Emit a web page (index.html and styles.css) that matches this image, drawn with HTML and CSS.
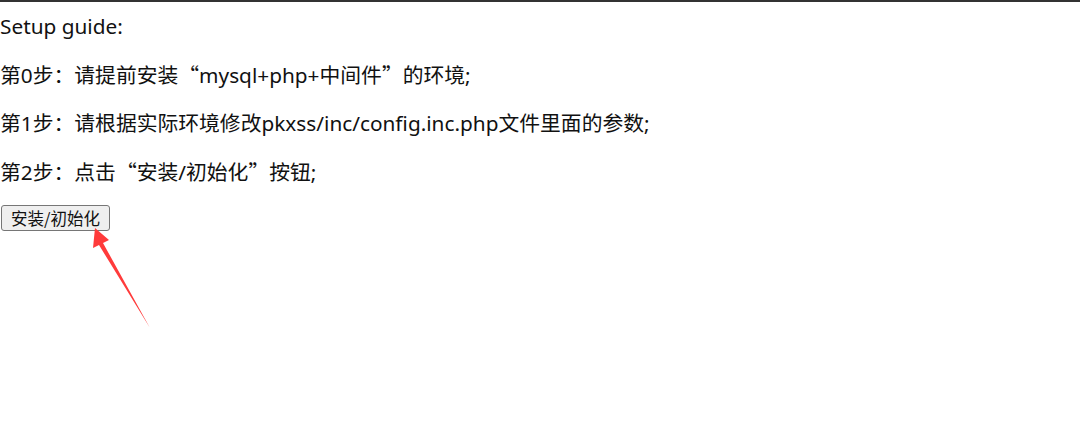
FILE: index.html
```html
<!DOCTYPE html>
<html>
<head>
<meta charset="utf-8">
<link rel="stylesheet" href="styles.css">
</head>
<body>
<div class="page">
  <p class="line">Setup guide:</p>
  <p class="line">第0步：请提前安装<span class="q">“</span>mysql+php+中间件<span class="q">”</span>的环境;</p>
  <p class="line">第1步：请根据实际环境修改pkxss/inc/config.inc.php文件里面的参数;</p>
  <p class="line">第2步：点击<span class="q">“</span>安装/初始化<span class="q">”</span>按钮;</p>
  <button class="btn">安装/初始化</button>
  <svg class="arrow" width="1080" height="440" viewBox="0 0 1080 440">
    <polygon points="95,228 109,240 103,243 150,328 99,245 93,248" fill="#ff3b3b"/>
  </svg>
</div>
</body>
</html>
```
FILE: styles.css
```css
html, body {
  margin: 0;
  padding: 0;
  background: #fff;
}
.page {
  position: relative;
  width: 1080px;
  height: 440px;
  border-top: 2px solid #333;
  box-sizing: border-box;
  padding-top: 10px;
  font-family: "Noto Sans", "Noto Sans CJK SC", sans-serif;
  color: #111;
}
.line {
  margin: 0 0 20px 0;
  font-size: 20.8px;
  line-height: 28px;
}
.q {
  font-family: "Noto Sans CJK SC", sans-serif;
}
.btn {
  display: block;
  margin: -1px 0 0 1px;
  height: 26px;
  padding: 0 9px 1px;
  font-family: "Noto Sans CJK SC", sans-serif;
  font-size: 16.5px;
  line-height: 22px;
  color: #111;
  background: #efefef;
  border: 1px solid #767676;
  border-radius: 3px;
}
.arrow {
  position: absolute;
  left: 0;
  top: -2px;
  pointer-events: none;
}
```
